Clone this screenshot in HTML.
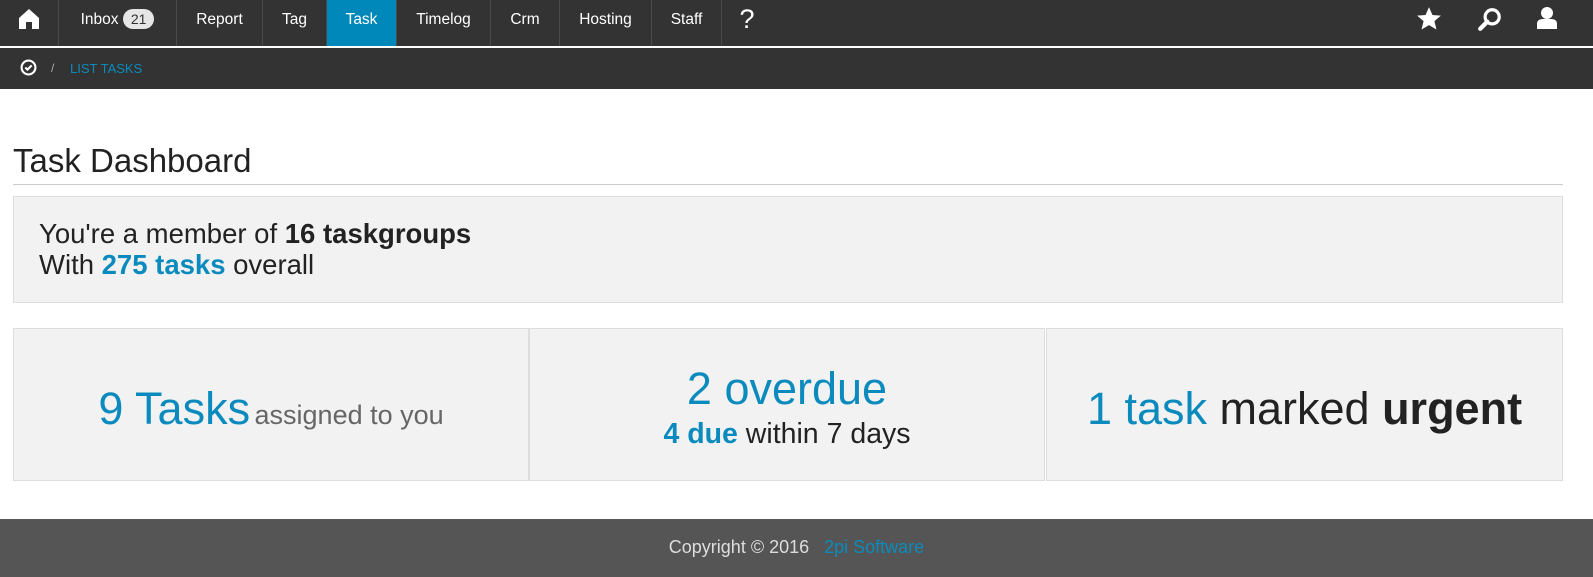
<!DOCTYPE html>
<html><head><style>
*{margin:0;padding:0;box-sizing:border-box}
body{width:1593px;height:577px;background:#fff;font-family:"Liberation Sans",Arial,sans-serif;position:relative;overflow:hidden;color:#222}
.nav{position:absolute;top:0;left:0;width:1593px;height:46px;background:#333}
.nav a{position:absolute;top:0;height:46px;line-height:40px;color:#fff;font-size:15.5px;text-align:center;border-right:1px solid #4a4a4a}
.line{position:absolute;top:46px;left:0;width:1593px;height:2px;background:#fff}
.bc{position:absolute;top:48px;left:0;width:1593px;height:41px;background:#333}
.blue{color:#0b8bbd}
.box{position:absolute;background:#f2f2f2;border:1px solid #ddd}
.card{position:absolute;top:328px;height:153px;background:#f2f2f2;border:1px solid #ddd;text-align:center}
</style></head><body>
<div class="nav">
<a style="left:0;width:59px"><svg width="22" height="22" viewBox="0 0 22 22" style="margin-top:8px"><path d="M11 1 L21 10 V21 H14 V14 H8 V21 H1 V10 Z" fill="#fff"/></svg></a>
<a style="left:59px;width:118px">Inbox <span style="display:inline-block;background:#e6e6e6;color:#333;border-radius:10px;padding:0 8px;line-height:20px;font-size:14px">21</span></a>
<a style="left:177px;width:86px">Report</a>
<a style="left:263px;width:64px">Tag</a>
<a style="left:327px;width:70px;background:#0088ba">Task</a>
<a style="left:397px;width:94px">Timelog</a>
<a style="left:491px;width:69px">Crm</a>
<a style="left:560px;width:92px">Hosting</a>
<a style="left:652px;width:70px">Staff</a>
<a style="left:722px;width:50px;font-size:27px;border:none;line-height:38px">?</a>
<svg style="position:absolute;left:1416px;top:6px" width="26" height="26" viewBox="0 0 24 24"><path d="M12 1l3.2 7.3 7.8.6-6 5.1 1.9 7.7L12 17.6 5.1 21.7 7 14 1 8.9l7.8-.6z" fill="#fff"/></svg>
<svg style="position:absolute;left:1477px;top:6px" width="26" height="26" viewBox="0 0 24 24"><circle cx="14" cy="10" r="6.5" fill="none" stroke="#fff" stroke-width="3"/><path d="M9.5 14.5 L3 21" stroke="#fff" stroke-width="4" stroke-linecap="round"/></svg>
<svg style="position:absolute;left:1535px;top:6px" width="24" height="24" viewBox="0 0 24 24"><circle cx="12" cy="7" r="6" fill="#fff"/><path d="M2 23 V18 Q2 13 8 13 H16 Q22 13 22 18 V23Z" fill="#fff"/></svg>
</div>
<div class="line"></div>
<div class="bc">
<svg style="position:absolute;left:20px;top:11px" width="17" height="17" viewBox="0 0 16 16"><circle cx="8" cy="8" r="6.5" fill="none" stroke="#fff" stroke-width="2"/><path d="M5 8l2 2 4-4" fill="none" stroke="#fff" stroke-width="2"/></svg>
<span style="position:absolute;left:51px;top:13px;color:#aaa;font-size:12px">/</span>
<span class="blue" style="position:absolute;left:70px;top:13px;font-size:13px">LIST TASKS</span>
</div>
<div style="position:absolute;left:13px;top:142px;font-size:33px;color:#222">Task Dashboard</div>
<div style="position:absolute;left:13px;top:184px;width:1550px;height:1px;background:#ccc"></div>
<div class="box" style="left:13px;top:196px;width:1550px;height:107px;padding:21px 25px;font-size:27.5px;line-height:31px">
You're a member of <b>16 taskgroups</b><br>With <b class="blue">275 tasks</b> overall</div>
<div class="card" style="left:13px;width:516px;padding-top:54px"><span class="blue" style="font-size:45px">9 Tasks</span> <span style="font-size:27px;color:#666">assigned to you</span></div>
<div class="card" style="left:529px;width:516px;padding-top:35px"><div class="blue" style="font-size:45px;line-height:50px">2 overdue</div><div style="font-size:28.5px;margin-top:4px"><b class="blue">4 due</b> within 7 days</div></div>
<div class="card" style="left:1046px;width:517px;padding-top:54px;font-size:45px"><span class="blue">1 task</span> marked <b>urgent</b></div>
<div style="position:absolute;left:0;top:519px;width:1593px;height:58px;background:#555;text-align:center;color:#ddd;font-size:18px;padding-top:18px">Copyright © 2016 &nbsp;&nbsp;<span class="blue">2pi Software</span></div>
</body></html>
